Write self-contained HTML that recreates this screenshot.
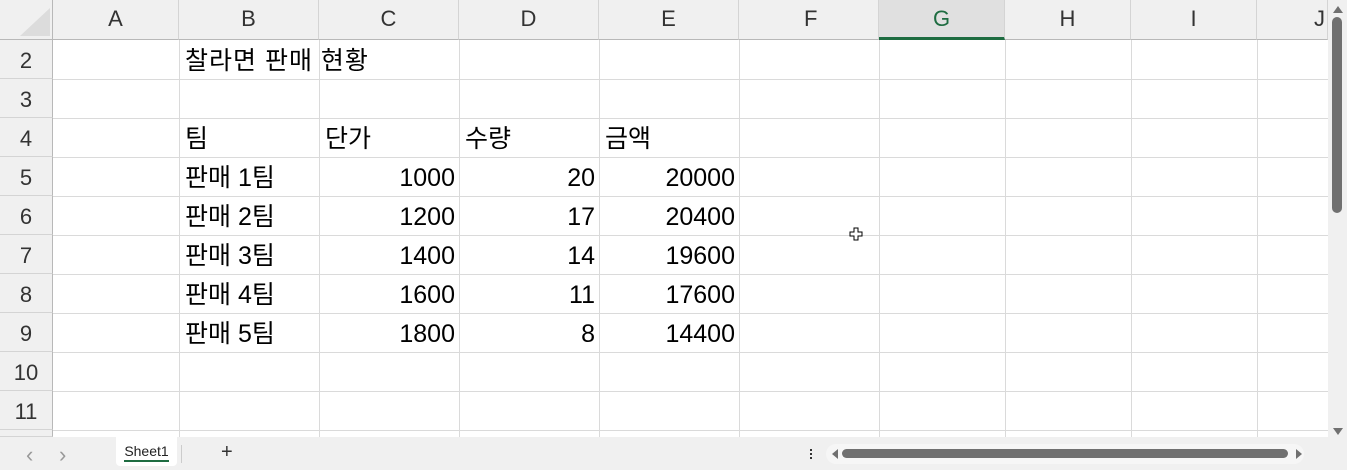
<!DOCTYPE html><html><head><meta charset="utf-8"><style>
body{margin:0;width:1347px;height:470px;overflow:hidden;background:#fff;font-family:"Liberation Sans","Noto Sans CJK KR",sans-serif;position:relative}
div{position:absolute;box-sizing:border-box}
.ch{top:0;height:40px;background:#f0f0f0;border-right:1px solid #d4d4d4;border-bottom:1px solid #b8b8b8;text-align:center;line-height:38px;font-size:22px;color:#333}
.rh{left:0;width:53px;height:39px;background:#f0f0f0;border-bottom:1px solid #d4d4d4;border-right:1px solid #b8b8b8;text-align:center;line-height:42px;font-size:22px;color:#333}
.vl{top:40px;height:397px;width:1px;background:#dadada}
.hl{left:53px;width:1275px;height:1px;background:#dadada}
.t{font-size:25px;color:#000;line-height:40px;height:39px;white-space:nowrap}
.r{text-align:right}
</style></head><body>
<div style="left:0;top:0;width:53px;height:40px;background:#f0f0f0;border-right:1px solid #b8b8b8;border-bottom:1px solid #b8b8b8"></div>
<svg style="position:absolute;left:17px;top:5px" width="34" height="32"><polygon points="33,3 33,31 3,31" fill="#dcdcdc"/></svg>
<div class="ch" style="left:53px;width:126px">A</div>
<div class="ch" style="left:179px;width:140px">B</div>
<div class="ch" style="left:319px;width:140px">C</div>
<div class="ch" style="left:459px;width:140px">D</div>
<div class="ch" style="left:599px;width:140px">E</div>
<div class="ch" style="left:739px;width:140px;text-align:left;padding-left:65px">F</div>
<div class="ch" style="left:879px;width:126px;background:#e0e0e0;color:#1e6c41;border-bottom:3px solid #1e6c41">G</div>
<div class="ch" style="left:1005px;width:126px">H</div>
<div class="ch" style="left:1131px;width:126px">I</div>
<div class="ch" style="left:1257px;width:71px;text-align:right;padding-right:2px">J</div>
<div class="rh" style="top:40px">2</div><div class="rh" style="top:79px">3</div><div class="rh" style="top:118px">4</div><div class="rh" style="top:157px">5</div><div class="rh" style="top:196px">6</div><div class="rh" style="top:235px">7</div><div class="rh" style="top:274px">8</div><div class="rh" style="top:313px">9</div><div class="rh" style="top:352px">10</div><div class="rh" style="top:391px">11</div>
<div class="rh" style="top:430px;height:7px"></div>
<div class="vl" style="left:179px"></div><div class="vl" style="left:319px"></div><div class="vl" style="left:459px"></div><div class="vl" style="left:599px"></div><div class="vl" style="left:739px"></div><div class="vl" style="left:879px"></div><div class="vl" style="left:1005px"></div><div class="vl" style="left:1131px"></div><div class="vl" style="left:1257px"></div>
<div class="hl" style="top:79px"></div><div class="hl" style="top:118px"></div><div class="hl" style="top:157px"></div><div class="hl" style="top:196px"></div><div class="hl" style="top:235px"></div><div class="hl" style="top:274px"></div><div class="hl" style="top:313px"></div><div class="hl" style="top:352px"></div><div class="hl" style="top:391px"></div><div class="hl" style="top:430px"></div>
<div class="t" style="left:185px;top:41px;letter-spacing:1px">찰라면 판매 현황</div>
<div class="t" style="left:185px;top:119px">팀</div><div class="t" style="left:325px;top:119px">단가</div><div class="t" style="left:465px;top:119px">수량</div><div class="t" style="left:605px;top:119px">금액</div>
<div class="t" style="left:185px;top:158px">판매 1팀</div><div class="t r" style="left:319px;width:136px;top:158px">1000</div><div class="t r" style="left:459px;width:136px;top:158px">20</div><div class="t r" style="left:599px;width:136px;top:158px">20000</div>
<div class="t" style="left:185px;top:197px">판매 2팀</div><div class="t r" style="left:319px;width:136px;top:197px">1200</div><div class="t r" style="left:459px;width:136px;top:197px">17</div><div class="t r" style="left:599px;width:136px;top:197px">20400</div>
<div class="t" style="left:185px;top:236px">판매 3팀</div><div class="t r" style="left:319px;width:136px;top:236px">1400</div><div class="t r" style="left:459px;width:136px;top:236px">14</div><div class="t r" style="left:599px;width:136px;top:236px">19600</div>
<div class="t" style="left:185px;top:275px">판매 4팀</div><div class="t r" style="left:319px;width:136px;top:275px">1600</div><div class="t r" style="left:459px;width:136px;top:275px">11</div><div class="t r" style="left:599px;width:136px;top:275px">17600</div>
<div class="t" style="left:185px;top:314px">판매 5팀</div><div class="t r" style="left:319px;width:136px;top:314px">1800</div><div class="t r" style="left:459px;width:136px;top:314px">8</div><div class="t r" style="left:599px;width:136px;top:314px">14400</div>
<svg style="position:absolute;left:849px;top:227px" width="15" height="15"><path d="M5 1h4v4h4v4h-4v4h-4v-4h-4v-4h4z" fill="#fff" stroke="#000" stroke-width="1"/></svg>
<div style="left:1328px;top:0;width:19px;height:437px;background:#f0f0f0"></div>
<svg style="position:absolute;left:1330px;top:4px" width="16" height="10"><polygon points="3,9 13,9 8,2" fill="#707070"/></svg>
<div style="left:1332px;top:17px;width:10px;height:196px;background:#707070;border-radius:5px"></div>
<svg style="position:absolute;left:1330px;top:426px" width="16" height="10"><polygon points="3,2 13,2 8,9" fill="#707070"/></svg>
<div style="left:0;top:437px;width:1347px;height:33px;background:#f0f0f0"></div>
<div style="left:26px;top:442px;color:#999;font-size:22px">&#8249;</div>
<div style="left:59px;top:442px;color:#999;font-size:22px">&#8250;</div>
<div style="left:116px;top:437px;width:61px;height:29px;background:#fff;border-radius:0 0 4px 4px;text-align:center;font-size:14px;line-height:28px;color:#222">Sheet1<div style="left:8px;top:23px;width:45px;height:2px;background:#1e6c41"></div></div>
<div style="left:181px;top:445px;width:1px;height:18px;background:#ccc"></div>
<div style="left:221px;top:441px;font-size:20px;color:#333">+</div>
<div style="left:810px;top:449px;width:2px;height:2px;background:#333;box-shadow:0 4px #333,0 8px #333"></div>
<div style="left:826px;top:444px;width:478px;height:20px;background:#f6f6f6;border-radius:10px"></div>
<svg style="position:absolute;left:829px;top:448px" width="12" height="12"><polygon points="9,1 9,11 3,6" fill="#707070"/></svg>
<div style="left:842px;top:449px;width:446px;height:9px;background:#707070;border-radius:5px"></div>
<svg style="position:absolute;left:1293px;top:448px" width="12" height="12"><polygon points="3,1 3,11 9,6" fill="#707070"/></svg>
</body></html>
